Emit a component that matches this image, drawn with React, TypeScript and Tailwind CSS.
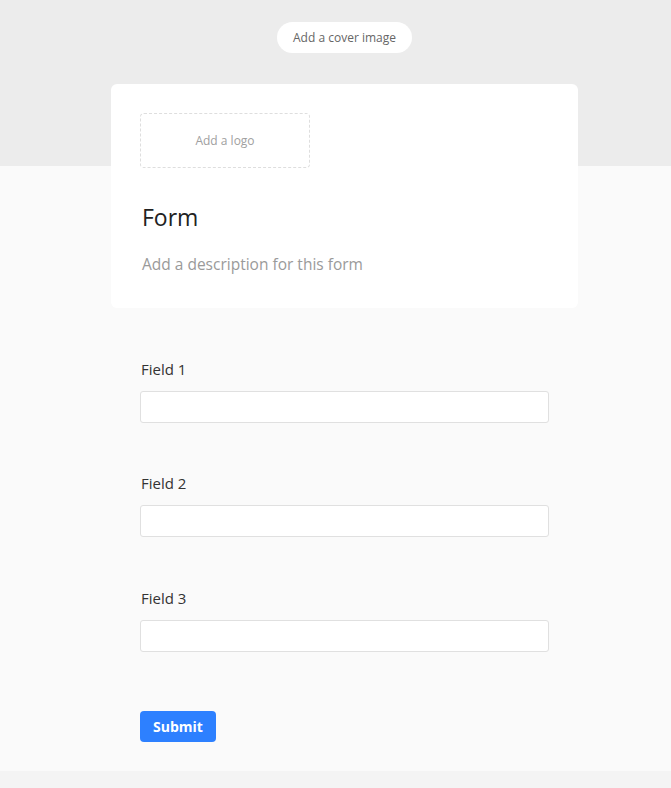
const fields = [
  { label: "Field 1", gap: "mb-[49px]" },
  { label: "Field 2", gap: "mb-[50px]" },
  { label: "Field 3", gap: "mb-0" },
];

export default function App() {
  return (
    <div
      className="min-h-[788px] bg-[#f4f4f4]"
      style={{ fontFamily: '"Open Sans", "Noto Sans", sans-serif' }}
    >
      {/* Cover */}
      <div className="h-[166px] bg-[#ececec] pt-[22px]">
        <div className="ml-[111px] flex w-[467px] justify-center">
          <button className="h-[31px] w-[135px] rounded-full bg-white text-[12px] text-[#666]">
            Add a cover image
          </button>
        </div>
      </div>

      {/* Body */}
      <div className="flow-root bg-[#fafafa] pb-[29px]">
        <div className="-mt-[82px] ml-[111px] w-[467px]">
          <div className="rounded-[6px] bg-white px-[29px] pt-[29px] pb-[32px]">
            <div className="flex h-[55px] w-[170px] items-center justify-center rounded-[4px] border border-dashed border-[#dedede] text-[12px] text-[#a0a0a0]">
              Add a logo
            </div>
            <h1 className="mt-[34px] ml-[2px] text-[23px] font-medium leading-[30px] text-[#222]">
              Form
            </h1>
            <p className="mt-[20px] ml-[2px] text-[15.5px] leading-[24px] text-[#9a9a9a]">
              Add a description for this form
            </p>
          </div>

          <div className="px-[29px] pt-[50px]">
            {fields.map((f) => (
              <div key={f.label} className={f.gap}>
                <label className="ml-[1px] block text-[15px] leading-[22px] text-[#333]">
                  {f.label}
                </label>
                <input
                  type="text"
                  className="mt-[11px] block h-[32px] w-full rounded-[3px] border border-[#e0e0e0] bg-white"
                />
              </div>
            ))}
            <button className="mt-[59px] h-[31px] w-[76px] rounded-[4px] bg-[#2d80ff] text-[14px] font-bold text-white">
              Submit
            </button>
          </div>
        </div>
      </div>
    </div>
  );
}
